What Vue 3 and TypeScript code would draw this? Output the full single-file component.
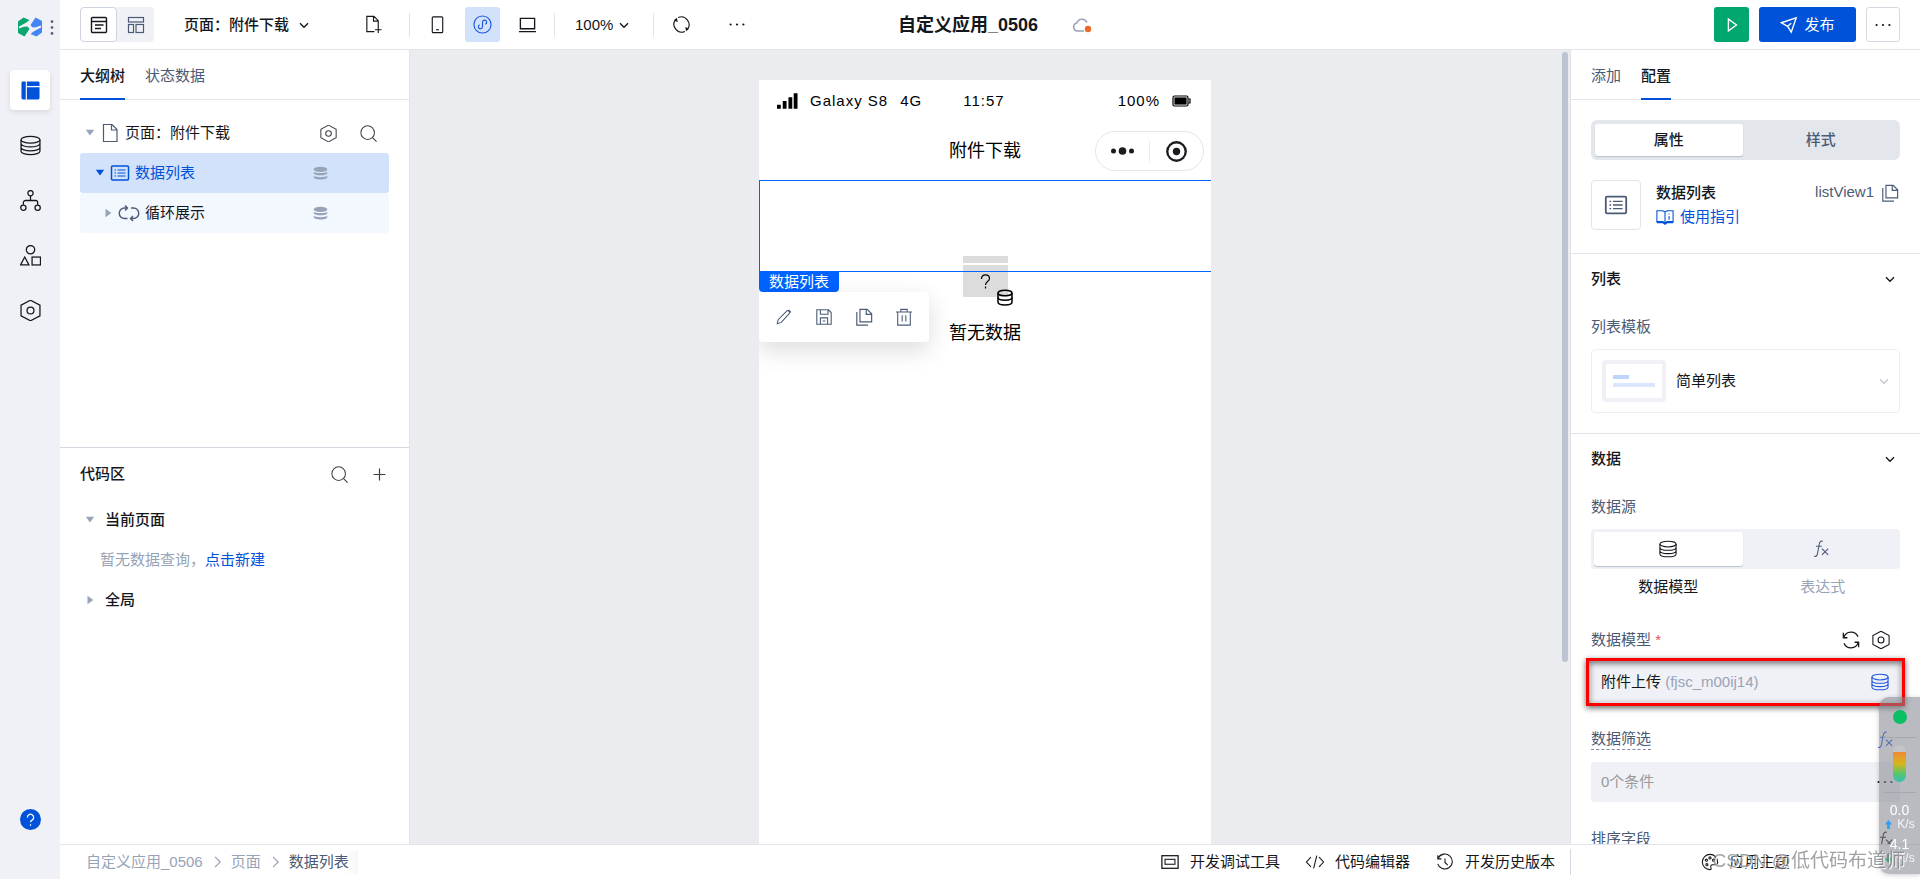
<script setup lang="ts">
import { h, ref, type FunctionalComponent } from 'vue'

interface Glyph {
  box: string
  body: string
}

const glyph = (body: string, box = '0 0 20 20'): Glyph => ({ box, body })

const glyphs: Record<string, Glyph> = {
  outline: glyph('<rect x="2.500" y="2.500" width="15" height="15" rx="1" stroke-width="1.400"/><path d="M2.500 6.500h15M6 10h8.500M6 13.500h6" stroke-width="1.400"/>'),
  blocks: glyph('<rect x="2.500" y="2.500" width="15" height="4.500"/><rect x="2.500" y="9.500" width="5" height="8"/><rect x="10" y="9.500" width="7.500" height="8"/>'),
  down: glyph('<path d="M5.500 8l4.500 4.500L14.500 8" stroke-width="1.500"/>'),
  right: glyph('<path d="M7.500 3.500l6.500 6.500-6.500 6.500" stroke-width="1.500"/>'),
  filePlus: glyph('<path d="M11 17.500H3V1.500h7.500l4.500 4.500v6M10 1.500V6.500h5M15 12v7M11.500 15.500h7"/>'),
  phone: glyph('<rect x="4.500" y="2" width="11" height="16.500" rx="1"/><path d="M8.500 15.500h3"/>'),
  mini: glyph('<circle cx="10" cy="10" r="9"/><path d="M10 12.300V7.600a2.200 2.200 0 1 1 3 2M10 12.300a2.200 2.200 0 1 1-3-2"/>'),
  laptop: glyph('<path d="M2.500 3.500h15v11h-15zM1 17.500h18" stroke-width="1.400"/>'),
  rotate: glyph('<path d="M6.500 2.700A8.200 8.200 0 0 1 16 15.500M13.500 17.300A8.200 8.200 0 0 1 4 4.500"/><path d="M5.200 3L2 5.500 6 7.500zM14.800 17L18 14.500 14 12.500z" fill="currentColor" stroke="none"/>'),
  dots: glyph('<g fill="currentColor" stroke="none"><circle cx="2" cy="10" r="1.400"/><circle cx="10" cy="10" r="1.400"/><circle cx="18" cy="10" r="1.400"/></g>'),
  more: glyph('<g fill="currentColor" stroke="none"><circle cx="2" cy="3" r="1.600"/><circle cx="2" cy="10" r="1.600"/><circle cx="2" cy="17" r="1.600"/></g>', '0 0 4 20'),
  cloud: glyph('<path d="M12 16H5.500a4 4 0 0 1-.7-7.900A5.500 5.500 0 0 1 15 7.500" stroke-width="1.500"/><circle cx="16" cy="14" r="3.200" fill="#eb6a2a" stroke="none"/>'),
  play: glyph('<path d="M6 3.500l9 6.500-9 6.500z" stroke-width="1.500"/>'),
  send: glyph('<path d="M1.500 7.500L18 2l-5.500 16-4-6.500zM8.500 11.500L12.500 8" stroke-width="1.500"/>'),
  layout: glyph('<g fill="currentColor" stroke="none"><path d="M2 .5h3v19H2A1.500 1.500 0 0 1 .5 18V2A1.500 1.500 0 0 1 2 .5zM6.200.5H18A1.500 1.500 0 0 1 19.500 2v3.300H6.200zM6.200 6.500h13.300V18a1.500 1.500 0 0 1-1.500 1.500H6.200z"/></g>'),
  db: glyph('<ellipse cx="10" cy="4.500" rx="9" ry="3.200"/><path d="M1 4.500v11c0 1.800 4 3.200 9 3.200s9-1.400 9-3.200v-11M1 8.200c0 1.800 4 3.200 9 3.200s9-1.400 9-3.200M1 11.900c0 1.800 4 3.200 9 3.200s9-1.400 9-3.200"/>'),
  flow: glyph('<circle cx="10" cy="3" r="2.500"/><circle cx="3.200" cy="16.800" r="2.500"/><circle cx="16.800" cy="16.800" r="2.500"/><path d="M10 5.500V10M3.200 14v-2a2 2 0 0 1 2-2h9.600a2 2 0 0 1 2 2v2"/>'),
  shapes: glyph('<circle cx="10" cy="4.500" r="4"/><path d="M4.500 11.500l4 7.500h-8z"/><rect x="11.500" y="11.500" width="8" height="7.500"/>'),
  hex: glyph('<path d="M10 .200l9 4.800v10L10 19.800l-9-4.800V5z"/><circle cx="10" cy="10" r="3.300"/>'),
  triDown: glyph('<path d="M1 2h10L6 9z" fill="currentColor" stroke="none"/>', '0 0 12 12'),
  triRight: glyph('<path d="M3 1v10l7-5z" fill="currentColor" stroke="none"/>', '0 0 12 12'),
  page: glyph('<path d="M3.500 1.500h8.500l5 5v12H3.500zM11.500 1.500v5.500H17"/>'),
  list: glyph('<rect x="1.500" y="3" width="17" height="14" rx="1" stroke-width="1.500"/><path d="M7.500 7H15.500M7.500 10H15.500M7.500 13H15.500M4.500 7h1.500M4.500 10h1.500M4.500 13h1.500"/>'),
  loop: glyph('<path d="M9.500 15.500H6.500a5.200 5.200 0 0 1 0-10.500H9.500M7 2.500L9.500 5 7 7.500M13 5h2.500a5.200 5.200 0 0 1 0 10.500H12.500M15 13l-2.500 2.500L15 18" stroke-width="1.400"/>', '0 0 22 20'),
  stack: glyph('<g fill="currentColor" stroke="none"><ellipse cx="10" cy="4.500" rx="9" ry="3.400"/><path d="M1 7.500c2 2.600 16 2.600 18 0v2.500c-1 3.200-17 3.200-18 0zM1 13c2 2.600 16 2.600 18 0v2.300c-1 3.400-17 3.400-18 0z"/></g>'),
  search: glyph('<circle cx="9" cy="9" r="8"/><path d="M14.800 14.800L19.500 19.500"/>'),
  plus: glyph('<path d="M10 3v14M3 10h14" stroke-width="1.400"/>'),
  help: glyph('<circle cx="10" cy="10" r="10" fill="#0052d9" stroke="none"/><path d="M7 8a3 3 0 1 1 4.500 2.600c-1 .6-1.500 1-1.500 2M10 14.500v1.500" stroke="#fff"/>'),
  signal: glyph('<path d="M0 12h4v4H0zM6 8h4v8H6zM12 4h4v12h-4zM17.500 0h4v16h-4z" fill="currentColor" stroke="none"/>', '0 0 22 16'),
  battery: glyph('<rect x="1" y="1" width="15" height="10" rx="1.500"/><rect x="3" y="3" width="11" height="6" fill="currentColor"/><path d="M16.500 4h1.500v4h-1.500"/>', '0 0 19 12'),
  pencil: glyph('<path d="M2.500 17.500l1-4.500L13.500 3c.8-.8 3.500 1.700 2.700 2.700L7 16zM15 2l2.800 2.800"/>'),
  save: glyph('<path d="M2 2h13l3 3v13h-16zM6 2v5h8.500V2M6 18V11h8v7M8.500 14.500h3"/>'),
  copy: glyph('<path d="M5.500 1.500h8l5 5V15.500h-13zM12.500 1.500v5.500H18.500M2 4.500v14.500h12.500" stroke-width="1.300"/>'),
  trash: glyph('<path d="M1 4.500h18M6.500 4.500V1.500h7v3M3 4.500v14.500h14V4.500M8 8v7M12 8v7"/>'),
  target: glyph('<circle cx="10" cy="10" r="8.800" stroke-width="2.200"/><circle cx="10" cy="10" r="3.500" fill="currentColor" stroke="none"/>'),
  capsuleDots: glyph('<g fill="currentColor" stroke="none"><circle cx="3" cy="5" r="2.500"/><circle cx="12" cy="5" r="3.800"/><circle cx="21" cy="5" r="2.500"/></g>', '0 0 24 10'),
  empty: glyph('<path d="M1 0h45v7H1zM1 9h45v32H1z" fill="#dcdcdc" stroke="none"/><path d="M19.500 23c0-2.600 1.700-4.200 4-4.200s4 1.500 4 3.700c0 3.200-4 3-4 6.500M23.500 30.500v2"/><g transform="translate(35 33)" stroke-width="1.500"><path d="M1 4v9c0 1.800 3.100 3 7 3s7-1.200 7-3V4"/><ellipse cx="8" cy="4" rx="7" ry="2.800"/><path d="M1 8.500c0 1.600 3.100 2.700 7 2.700s7-1.100 7-2.700"/></g>', '-5 0 57 50'),
  book: glyph('<path d="M1 3h6.500L10 4.500 12.500 3H19v12.500h-6.500L10 17l-2.500-1.500H1zM10 4.500V17M14.500 9v4M14.500 6v1.200"/><path d="M1 14.500h6.500l2.500 1 2.500-1H19V17h-6.500L10 18.800 7.500 17H1z" fill="currentColor" stroke="none"/>'),
  fx: glyph('<path d="M12 1.500C9 .3 8.400 3 8 5L6 15.500c-.4 2-1.500 3.300-3.500 2.500M4.500 7H11"/><path d="M11 9.500l7 7M18 9.500l-7 7"/>'),
  refresh: glyph('<path d="M2 7a8.500 8.500 0 0 1 15.800-.5M18 13A8.500 8.500 0 0 1 2.200 13.500M1.500 2v5.500H6M18.500 18v-5.500H14" stroke-width="1.400"/>'),
  debug: glyph('<rect x="1" y="3" width="18" height="14" stroke-width="1.400"/><rect x="4.500" y="7" width="11" height="5.500"/>'),
  code: glyph('<path d="M5.500 4.500L.500 10l5 5.500M14.500 4.500l5 5.500-5 5.500M12 3L8.500 17"/>'),
  history: glyph('<path d="M2.500 5.500a8.300 8.300 0 1 1-.6 6.500M2 2.500v4h4M10 6v4.500l3 3"/>'),
  palette: glyph('<path d="M10 1.500a8.500 8.500 0 1 0 0 17c1.500 0 1.500-1.500 1-2.500-.7-1.600.2-3 1.800-3h3.200c1.800 0 2.500-1.300 2.500-3 0-4.700-3.800-8.500-8.500-8.500z"/><circle cx="6" cy="8" r="1.200"/><circle cx="10" cy="5.500" r="1.200"/><circle cx="14" cy="8" r="1.200"/><circle cx="6.500" cy="13" r="1.200"/>'),
  logo: glyph('<g stroke="none"><path d="M0 4.500L5.500.500l6 2.500C10 4 9.500 5 7.500 6L1 9.500v2c3-.5 6-3 9-1.500l1.500 2L6.500 19.500 0 16z" fill="#0aa870"/><path d="M24 15.500l-5.500 4-6-2.500c1.500-1 2-2 4-3l6.500-3.500v-2c-3 .5-6 3-9 1.500l-1.500-2L17.500.5 24 4z" fill="#4285f4"/></g>', '0 0 24 20'),
  up: glyph('<path d="M5 0l4 5H6.500v5h-3V5H1z" fill="currentColor" stroke="none"/>', '0 0 10 10'),
  dn: glyph('<path d="M5 10l4-5H6.500V0h-3v5H1z" fill="currentColor" stroke="none"/>', '0 0 10 10'),
}

const Icon: FunctionalComponent<{ name: string }> = (props) =>
  h('svg', {
    class: 'icon',
    viewBox: glyphs[props.name].box,
    fill: 'none',
    stroke: 'currentColor',
    'stroke-width': 1.2,
    'aria-hidden': 'true',
    innerHTML: glyphs[props.name].body,
  })
Icon.props = ['name']

const rail = [
  { icon: 'layout', label: '页面设计' },
  { icon: 'db', label: '数据' },
  { icon: 'flow', label: '流程' },
  { icon: 'shapes', label: '组件' },
  { icon: 'hex', label: '设置' },
]
const activeRail = ref('layout')
const device = ref('mini')
const devices = [
  { icon: 'phone', label: '手机' },
  { icon: 'mini', label: '小程序' },
  { icon: 'laptop', label: '电脑' },
]
const leftTab = ref('大纲树')
const rightTab = ref('配置')
const propTab = ref('属性')
const source = ref('数据模型')
const sources = [
  { name: '数据模型', icon: 'db' },
  { name: '表达式', icon: 'fx' },
]
const tools = [
  { icon: 'pencil', label: '编辑' },
  { icon: 'save', label: '保存' },
  { icon: 'copy', label: '复制' },
  { icon: 'trash', label: '删除' },
]
const footerTools = [
  { icon: 'debug', name: '开发调试工具' },
  { icon: 'code', name: '代码编辑器' },
  { icon: 'history', name: '开发历史版本' },
]
</script>

<template>
  <div class="app">
    <nav class="rail">
      <div class="brand">
        <Icon name="logo" class="logo" />
        <button class="brand-more" aria-label="菜单"><Icon name="more" /></button>
      </div>
      <div class="rail-items">
        <button
          v-for="item in rail"
          :key="item.icon"
          class="rail-btn"
          :class="{ on: activeRail === item.icon }"
          :aria-label="item.label"
          @click="activeRail = item.icon"
        >
          <Icon :name="item.icon" />
        </button>
      </div>
      <button class="rail-btn help" aria-label="帮助"><Icon name="help" /></button>
    </nav>

    <div class="main">
      <header class="topbar">
        <div class="top-left">
          <div class="view-switch">
            <button class="view on" aria-label="页面视图"><Icon name="outline" /></button>
            <button class="view" aria-label="布局视图"><Icon name="blocks" /></button>
          </div>
          <button class="page-pick">页面：附件下载 <Icon name="down" /></button>
          <button class="tool" aria-label="新建页面"><Icon name="filePlus" /></button>
          <div class="tool-group">
            <button
              v-for="d in devices"
              :key="d.icon"
              class="tool"
              :class="{ on: device === d.icon }"
              :aria-label="d.label"
              @click="device = d.icon"
            >
              <Icon :name="d.icon" />
            </button>
          </div>
          <div class="tool-group zoom">
            <button class="zoom-btn">100%<Icon name="down" /></button>
          </div>
          <div class="tool-group last">
            <button class="tool" aria-label="刷新"><Icon name="rotate" /></button>
            <button class="tool small" aria-label="更多"><Icon name="dots" /></button>
          </div>
        </div>
        <div class="top-title">
          <h1>自定义应用_0506</h1>
          <Icon name="cloud" class="cloud" />
        </div>
        <div class="top-right">
          <button class="run" aria-label="预览"><Icon name="play" /></button>
          <button class="publish"><Icon name="send" />发布</button>
          <button class="extra" aria-label="更多操作"><Icon name="dots" /></button>
        </div>
      </header>

      <div class="work">
        <aside class="left">
          <section class="outline">
            <div class="tabs">
              <button
                v-for="t in ['大纲树', '状态数据']"
                :key="t"
                class="tab"
                :class="{ on: leftTab === t }"
                @click="leftTab = t"
              >{{ t }}</button>
            </div>
            <ul class="tree">
              <li class="node">
                <Icon name="triDown" class="tri" />
                <Icon name="page" class="kind" />
                <span class="node-name">页面：附件下载</span>
                <button class="ghost" aria-label="页面设置"><Icon name="hex" /></button>
                <button class="ghost" aria-label="搜索组件"><Icon name="search" /></button>
              </li>
              <li class="node selected level1">
                <Icon name="triDown" class="tri" />
                <Icon name="list" class="kind" />
                <span class="node-name">数据列表</span>
                <Icon name="stack" class="bound" />
              </li>
              <li class="node child level2">
                <Icon name="triRight" class="tri" />
                <Icon name="loop" class="kind wide" />
                <span class="node-name">循环展示</span>
                <Icon name="stack" class="bound" />
              </li>
            </ul>
          </section>
          <section class="code">
            <div class="code-head">
              <h2>代码区</h2>
              <button class="ghost" aria-label="搜索代码"><Icon name="search" /></button>
              <button class="ghost" aria-label="新建代码"><Icon name="plus" /></button>
            </div>
            <div class="code-row"><Icon name="triDown" class="tri" />当前页面</div>
            <p class="code-empty">暂无数据查询，<a href="#new">点击新建</a></p>
            <div class="code-row"><Icon name="triRight" class="tri" />全局</div>
          </section>
        </aside>

        <main class="canvas">
          <div class="stage">
            <div class="phone">
              <div class="status">
                <span class="carrier"><Icon name="signal" class="signal" /><span>Galaxy S8</span><span>4G</span></span>
                <span>11:57</span>
                <span class="power"><span>100%</span><Icon name="battery" class="battery" /></span>
              </div>
              <div class="navbar">
                <span>附件下载</span>
                <div class="capsule">
                  <Icon name="capsuleDots" class="cap-dots" />
                  <Icon name="target" class="cap-target" />
                </div>
              </div>
              <div class="list">
                <div class="placeholder">
                  <Icon name="empty" class="empty" />
                  <span>暂无数据</span>
                </div>
                <div class="selection"></div>
                <div class="floating">
                  <span class="tag">数据列表</span>
                  <div class="actions">
                    <button v-for="t in tools" :key="t.icon" :aria-label="t.label"><Icon :name="t.icon" /></button>
                  </div>
                </div>
              </div>
            </div>
          </div>
          <div class="scroll"><div class="thumb"></div></div>
        </main>

        <aside class="right">
          <div class="tabs">
            <button
              v-for="t in ['添加', '配置']"
              :key="t"
              class="tab"
              :class="{ on: rightTab === t }"
              @click="rightTab = t"
            >{{ t }}</button>
          </div>
          <div class="intro">
            <div class="segment solid">
              <button
                v-for="t in ['属性', '样式']"
                :key="t"
                :class="{ on: propTab === t }"
                @click="propTab = t"
              >{{ t }}</button>
            </div>
            <div class="component">
              <div class="thumbnail"><Icon name="list" /></div>
              <div class="component-text">
                <strong>数据列表</strong>
                <a href="#guide"><Icon name="book" />使用指引</a>
              </div>
              <span class="component-id">listView1</span>
              <button class="copy-id" aria-label="复制标识"><Icon name="copy" /></button>
            </div>
          </div>

          <section class="group">
            <h3>列表<Icon name="down" /></h3>
            <div class="label">列表模板</div>
            <button class="template">
              <span class="preview"><i></i><b></b></span>
              <span class="template-name">简单列表</span>
              <Icon name="down" class="faint" />
            </button>
          </section>

          <section class="group">
            <h3>数据<Icon name="down" /></h3>
            <div class="label">数据源</div>
            <div class="segment">
              <button
                v-for="s in sources"
                :key="s.name"
                :class="{ on: source === s.name }"
                :aria-label="s.name"
                @click="source = s.name"
              ><Icon :name="s.icon" /></button>
            </div>
            <div class="segment-names"><span class="dark">数据模型</span><span>表达式</span></div>

            <div class="field first">
              <div class="label">
                <span>数据模型 <em>*</em></span>
                <span class="label-tools">
                  <button aria-label="刷新模型"><Icon name="refresh" /></button>
                  <button aria-label="模型设置"><Icon name="hex" /></button>
                </span>
              </div>
              <div class="marked">
                <button class="value">
                  附件上传&nbsp;<small>(fjsc_m00ij14)</small><Icon name="db" />
                </button>
                <div class="mark"></div>
              </div>
            </div>
            <div class="field">
              <div class="label"><span class="hint">数据筛选</span><button class="fx blue" aria-label="筛选表达式"><Icon name="fx" /></button></div>
              <button class="value muted">0个条件<Icon name="dots" /></button>
            </div>
            <div class="field">
              <div class="label"><span class="hint">排序字段</span><button class="fx" aria-label="排序表达式"><Icon name="fx" /></button></div>
            </div>
          </section>
        </aside>
      </div>

      <footer class="footer">
        <nav class="crumbs">
          <a href="#app">自定义应用_0506</a><Icon name="right" />
          <a href="#page">页面</a><Icon name="right" />
          <span class="here">数据列表</span>
        </nav>
        <div class="footer-tools">
          <button v-for="t in footerTools" :key="t.name"><Icon :name="t.icon" />{{ t.name }}</button>
        </div>
        <div class="theme"><button><Icon name="palette" />应用主题</button></div>
      </footer>
    </div>

    <div class="monitor">
      <span class="dot"></span>
      <span class="meter"><i></i></span>
      <div class="speed">0.0<small><Icon name="up" class="upload" />K/s</small></div>
      <div class="speed">4.1<small><Icon name="dn" class="download" />K/s</small></div>
    </div>
    <div class="watermark">CSDN @低代码布道师</div>
  </div>
</template>

<style>
body {
  margin: 0;
}
</style>

<style scoped>
.app {
  display: flex;
  height: 100vh;
  overflow: hidden;
  background: #fff;
  color: #14171c;
  font: 15px/24px "Liberation Sans", "Noto Sans CJK SC", sans-serif;
}
button {
  display: flex;
  align-items: center;
  justify-content: center;
  margin: 0;
  padding: 0;
  border: 0;
  background: none;
  color: inherit;
  font: inherit;
  cursor: pointer;
}
a {
  color: #0052d9;
  text-decoration: none;
}
h1, h2, h3, p, ul {
  margin: 0;
  padding: 0;
}
.icon {
  display: block;
  flex: none;
  width: 18px;
  height: 18px;
}

.rail {
  display: flex;
  flex: none;
  flex-direction: column;
  align-items: center;
  box-sizing: border-box;
  width: 60px;
  padding-bottom: 40px;
  background: #f0f1f6;
}
.brand {
  display: flex;
  align-items: center;
  justify-content: flex-end;
  gap: 8px;
  box-sizing: border-box;
  width: 60px;
  height: 54px;
  padding-right: 6px;
}
.logo {
  width: 24px;
  height: 20px;
}
.brand-more {
  color: #4b5b76;
}
.brand-more .icon {
  width: 4px;
  height: 17px;
}
.rail-items {
  display: flex;
  flex: 1;
  flex-direction: column;
  gap: 15px;
  padding-top: 16px;
}
.rail-btn {
  width: 40px;
  height: 40px;
  border-radius: 4px;
}
.help {
  height: 20px;
  margin-bottom: 10px;
}
.rail-btn .icon {
  width: 21px;
  height: 21px;
}
.rail-btn.on {
  background: #fff;
  box-shadow: 0 2px 5px #0000001a;
  color: #0052d9;
}
.rail-btn.on .icon {
  width: 19px;
  height: 19px;
}

.main {
  display: flex;
  flex: 1;
  flex-direction: column;
  min-width: 0;
}
.topbar {
  display: grid;
  flex: none;
  grid-template-columns: 1fr auto 1fr;
  align-items: center;
  box-sizing: border-box;
  height: 50px;
  padding: 0 20px;
  border-bottom: 1px solid #e2e4e9;
}
.top-left,
.top-right,
.top-title,
.tool-group {
  display: flex;
  align-items: center;
}
.view-switch {
  display: flex;
  border-radius: 4px;
  background: #f0f1f6;
}
.view {
  box-sizing: border-box;
  width: 37px;
  height: 35px;
  color: #4b5b76;
}
.view .icon {
  width: 20px;
  height: 20px;
}
.view.on {
  border: 1px solid #cfd5df;
  border-radius: 4px;
  background: #fff;
  color: #14171c;
}
.page-pick {
  gap: 6px;
  margin: 0 43px 0 30px;
  font-weight: 500;
}
.tool {
  width: 35px;
  height: 35px;
  border-radius: 3px;
}
.tool.on {
  background: #d2e2fb;
  color: #1f57dd;
}
.tool .icon {
  width: 19px;
  height: 19px;
}
.tool.small .icon {
  width: 16px;
}
.tool-group {
  gap: 10px;
}
.tool-group::before {
  width: 1px;
  height: 24px;
  background: #e2e4e9;
  content: "";
}
.page-pick + .tool {
  margin-right: 18px;
}
.zoom {
  gap: 20px;
  margin-left: 9px;
}
.zoom-btn {
  gap: 2px;
}
.last {
  margin-left: 20px;
}
.last .small {
  margin-left: 10px;
}
.top-title {
  gap: 34px;
  padding-left: 10px;
}
h1 {
  font-size: 18px;
  font-weight: 700;
}
.cloud {
  width: 20px;
  height: 20px;
  color: #97a3b7;
}
.top-right {
  justify-content: flex-end;
  gap: 10px;
}
.top-right button {
  box-sizing: border-box;
  height: 35px;
  border-radius: 3px;
}
.run {
  width: 35px;
  background: #00a870;
  color: #fff;
}
.publish {
  gap: 6px;
  width: 97px;
  background: #0052d9;
  color: #fff;
}
.extra {
  width: 34px;
  border: 1px solid #d5dae2;
}
.extra .icon {
  width: 16px;
}

.work {
  display: flex;
  flex: 1;
  min-height: 0;
}
.left {
  display: flex;
  flex: none;
  flex-direction: column;
  box-sizing: border-box;
  width: 350px;
  border-right: 1px solid #e2e4e9;
}
.tabs {
  display: flex;
  flex: none;
  gap: 20px;
  box-sizing: border-box;
  height: 50px;
  padding: 0 20px;
  border-bottom: 1px solid #e2e4e9;
}
.tab {
  box-sizing: border-box;
  height: 50px;
  padding-top: 4px;
  border-bottom: 2px solid transparent;
  color: #4b5b76;
}
.tab.on {
  border-bottom-color: #0052d9;
  color: #14171c;
  font-weight: 500;
}
.outline {
  flex: 1;
}
.tree {
  padding: 13px 20px 0;
  list-style: none;
}
.node {
  display: flex;
  align-items: center;
  height: 40px;
  padding: 0 11px 0 5px;
  border-radius: 3px;
}
.tri {
  width: 10px;
  height: 10px;
  color: #97a3b7;
}
.kind {
  width: 20px;
  height: 20px;
  margin: 0 5px;
  color: #4b5b76;
}
.kind.wide {
  width: 22px;
}
.node-name {
  flex: 1;
}
.level1 {
  padding-left: 15px;
}
.level2 {
  padding-left: 23px;
}
.selected {
  background: #d2e2fb;
  color: #0052d9;
}
.selected .tri,
.selected .kind {
  color: #0052d9;
}
.child {
  background: #f3f7fe;
}
.bound {
  width: 15px;
  height: 15px;
  margin-right: 50px;
  color: #97a3b7;
}
.ghost {
  width: 20px;
  margin-left: 20px;
  color: #3b3f47;
}
.ghost .icon {
  width: 17px;
  height: 17px;
}
.code {
  box-sizing: border-box;
  height: 50%;
  border-top: 1px solid #d5d9e2;
}
.code-head {
  display: flex;
  align-items: center;
  height: 52px;
  padding: 0 20px;
}
h2 {
  flex: 1;
  font-size: 15px;
  font-weight: 500;
}
.code-row {
  display: flex;
  align-items: center;
  gap: 10px;
  height: 40px;
  padding-left: 25px;
  font-weight: 500;
}
.code-empty {
  padding-left: 40px;
  color: #97a3b7;
  line-height: 40px;
}

.canvas {
  display: flex;
  flex: 1;
  min-width: 0;
  background: #ebecf0;
}
.stage {
  display: flex;
  flex: 1;
  justify-content: center;
  min-width: 0;
  padding-top: 30px;
}
.phone {
  width: 452px;
  overflow: hidden;
  background: #fff;
  color: #000;
}
.status {
  display: grid;
  grid-template-columns: 1fr auto 1fr;
  align-items: center;
  height: 42px;
  padding: 0 20px 0 18px;
  letter-spacing: 1px;
}
.carrier,
.power {
  display: flex;
  align-items: center;
  gap: 12px;
}
.power {
  justify-content: flex-end;
}
.signal {
  width: 21px;
  height: 16px;
}
.battery {
  width: 19px;
  height: 12px;
}
.navbar {
  display: grid;
  grid-template-columns: 1fr auto 1fr;
  align-items: center;
  height: 58px;
  padding-right: 7px;
  padding-left: 7px;
  font-size: 18px;
}
.navbar > span {
  grid-column: 2;
}
.capsule {
  display: flex;
  align-items: center;
  justify-self: end;
  box-sizing: border-box;
  width: 109px;
  height: 40px;
  border: 1px solid #e5e6eb;
  border-radius: 20px;
  color: #1b1c1f;
}
.capsule .icon {
  flex: 1;
}
.cap-dots {
  height: 10px;
}
.cap-target {
  height: 21px;
  border-left: 1px solid #ebecf0;
}
.list {
  position: relative;
}
.placeholder {
  display: flex;
  flex-direction: column;
  align-items: center;
  gap: 15px;
  padding-top: 76px;
  font-size: 18px;
}
.empty {
  width: 57px;
  height: 50px;
}
.selection {
  position: absolute;
  top: 0;
  right: 0;
  left: 0;
  box-sizing: border-box;
  height: 92px;
  border: 1px solid #0062ff;
  border-right: 0;
}
.floating {
  position: absolute;
  top: 91px;
  left: 0;
}
.tag {
  display: block;
  width: 80px;
  border-radius: 0 0 4px 4px;
  background: #0062ff;
  color: #fff;
  line-height: 21px;
  text-align: center;
}
.actions {
  display: flex;
  align-items: center;
  gap: 22px;
  height: 50px;
  padding: 0 16px;
  border-radius: 4px;
  background: #fff;
  box-shadow: 0 8px 24px #00000024;
  color: #4b5b76;
}
.scroll {
  flex: none;
  width: 10px;
  padding-top: 2px;
}
.thumb {
  width: 6px;
  height: 77%;
  margin: 0 auto;
  border-radius: 3px;
  background: #bbc4d0;
}

.right {
  flex: none;
  box-sizing: border-box;
  width: 350px;
  overflow: hidden;
  border-left: 1px solid #e2e4e9;
}
.intro {
  padding: 20px 20px 23px;
}
.segment {
  display: grid;
  grid-template-columns: 1fr 1fr;
  box-sizing: border-box;
  height: 40px;
  padding: 3px;
  border-radius: 4px;
  background: #f0f1f6;
  color: #4b5b76;
}
.segment.solid {
  padding: 4px;
  border-radius: 6px;
  background: #e3e6eb;
  font-weight: 500;
}
.segment button {
  border-radius: 3px;
}
.segment .on {
  margin-right: 3px;
  background: #fff;
  box-shadow: 0 1px 1px #b8c0cc;
  color: #14171c;
}
.component {
  display: flex;
  align-items: flex-start;
  margin-top: 20px;
}
.thumbnail {
  display: grid;
  place-items: center;
  box-sizing: border-box;
  width: 50px;
  height: 50px;
  border: 1px solid #e2e4e9;
  border-radius: 4px;
  color: #4b5b76;
}
.thumbnail .icon {
  width: 24px;
  height: 24px;
}
.component-text {
  display: flex;
  flex: 1;
  flex-direction: column;
  padding: 1px 0 0 15px;
}
.component-text strong {
  font-weight: 500;
}
.component-text a {
  display: flex;
  align-items: center;
  gap: 6px;
}
.component-id {
  color: #4b5b76;
}
.copy-id {
  height: 25px;
  margin-right: 1px;
  margin-left: 7px;
  color: #4b5b76;
}
.group {
  padding: 0 20px 20px;
  border-top: 1px solid #e2e4e9;
}
h3 {
  display: flex;
  align-items: center;
  justify-content: space-between;
  height: 50px;
  margin-bottom: 10px;
  font-size: 15px;
  font-weight: 500;
}
h3 .icon {
  width: 20px;
}
.label {
  display: flex;
  align-items: center;
  justify-content: space-between;
  height: 25px;
  margin-bottom: 10px;
  color: #4b5b76;
}
.template {
  box-sizing: border-box;
  width: 100%;
  height: 64px;
  padding: 0 6px 0 10px;
  border: 1px solid #edeef2;
  border-radius: 4px;
}
.preview {
  display: flex;
  flex-direction: column;
  justify-content: center;
  gap: 4px;
  box-sizing: border-box;
  width: 64px;
  height: 42px;
  padding-left: 7px;
  border: 4px solid #f0f1f6;
  border-radius: 4px;
}
.preview i,
.preview b {
  width: 16px;
  height: 4px;
  background: #bed4fb;
}
.preview b {
  width: 42px;
  background: #d9e6fd;
}
.template-name {
  flex: 1;
  padding-left: 10px;
  text-align: left;
}
.faint {
  color: #c2c8d2;
}
.segment-names {
  display: grid;
  grid-template-columns: 1fr 1fr;
  margin-top: 8px;
  color: #97a3b7;
  line-height: 20px;
  text-align: center;
}
.dark {
  color: #14171c;
}
.field {
  margin-top: 25px;
}
.field.first {
  margin-top: 30px;
}
em {
  color: #e34d59;
  font-style: normal;
}
.label-tools {
  display: flex;
  gap: 12px;
  padding-right: 10px;
  color: #14171c;
}
.value {
  width: 100%;
  height: 40px;
  padding: 0 11px 0 10px;
  border-radius: 3px;
  background: #f0f1f6;
}
.value small {
  flex: 1;
  color: #97a3b7;
  font-size: 15px;
  text-align: left;
}
.value .icon {
  color: #1f57dd;
}
.marked {
  position: relative;
}
.mark {
  position: absolute;
  inset: -4px -5px;
  border: 3px solid #f00;
  box-shadow: 0 2px 6px #0009, inset 0 2px 6px #0009;
  pointer-events: none;
}
.hint {
  border-bottom: 1px dashed #7d899d;
  line-height: 20px;
}
.fx {
  padding-right: 6px;
  color: #14171c;
}
.fx.blue {
  color: #1f57dd;
}
.value.muted {
  justify-content: space-between;
  padding-right: 7px;
  color: #999;
}
.value.muted .icon {
  width: 16px;
  color: #14171c;
}

.footer {
  display: flex;
  flex: none;
  box-sizing: border-box;
  height: 35px;
  border-top: 1px solid #e2e4e9;
}
.crumbs {
  display: flex;
  flex: 1;
  align-items: center;
  gap: 6px;
  padding-left: 26px;
  color: #4b5b76;
}
.crumbs a,
.crumbs .icon {
  color: #97a3b7;
}
.crumbs .icon {
  width: 16px;
  height: 16px;
}
.here {
  padding-right: 9px;
  background: linear-gradient(90deg, #fff 80%, #f6f7f9);
}
.footer-tools {
  display: flex;
  gap: 25px;
  padding-right: 15px;
}
.footer button {
  gap: 10px;
}
.footer .footer-tools .icon {
  width: 20px;
}
.theme {
  display: flex;
  justify-content: center;
  box-sizing: border-box;
  width: 350px;
  margin: 4px 0;
  border-left: 1px solid #d5dae2;
}

.monitor {
  position: fixed;
  right: 0;
  bottom: 5px;
  display: flex;
  flex-direction: column;
  align-items: center;
  box-sizing: border-box;
  width: 41px;
  height: 177px;
  padding-top: 13px;
  border-radius: 10px 0 0 10px;
  background: #83868f8f;
  box-shadow: 0 1px 5px #00000033;
  color: #fff;
}
.dot {
  width: 14px;
  height: 14px;
  border-radius: 7px;
  background: #0bbf62;
}
.meter {
  display: flex;
  flex-direction: column;
  align-items: center;
  box-sizing: border-box;
  width: 33px;
  height: 56px;
  margin: 13px 0 10px;
  padding: 7px 0 10px;
  border: solid #a3aaaf;
  border-width: 1px 0;
}
.meter i {
  flex: 1;
  width: 13px;
  border-radius: 7px;
  background: linear-gradient(#c3c4c8 20%, #f08a35 20%, #d9b51c 50%, #55c76c 78%, #35bdb3);
}
.speed {
  font-size: 14px;
  font-weight: 500;
  line-height: 14px;
  text-align: center;
}
.speed + .speed {
  margin-top: 6px;
}
.speed small {
  display: flex;
  align-items: center;
  gap: 4px;
  font-size: 12px;
  font-weight: 400;
  opacity: 0.85;
}
.speed .icon {
  width: 9px;
  height: 9px;
}
.upload {
  color: #149bff;
}
.download {
  color: #0bae55;
}
.watermark {
  position: fixed;
  right: 15px;
  bottom: 4px;
  color: #6f7276a8;
  font-size: 19px;
  line-height: 28px;
  text-shadow: 1px 1px 1px #fff;
  pointer-events: none;
}
</style>
